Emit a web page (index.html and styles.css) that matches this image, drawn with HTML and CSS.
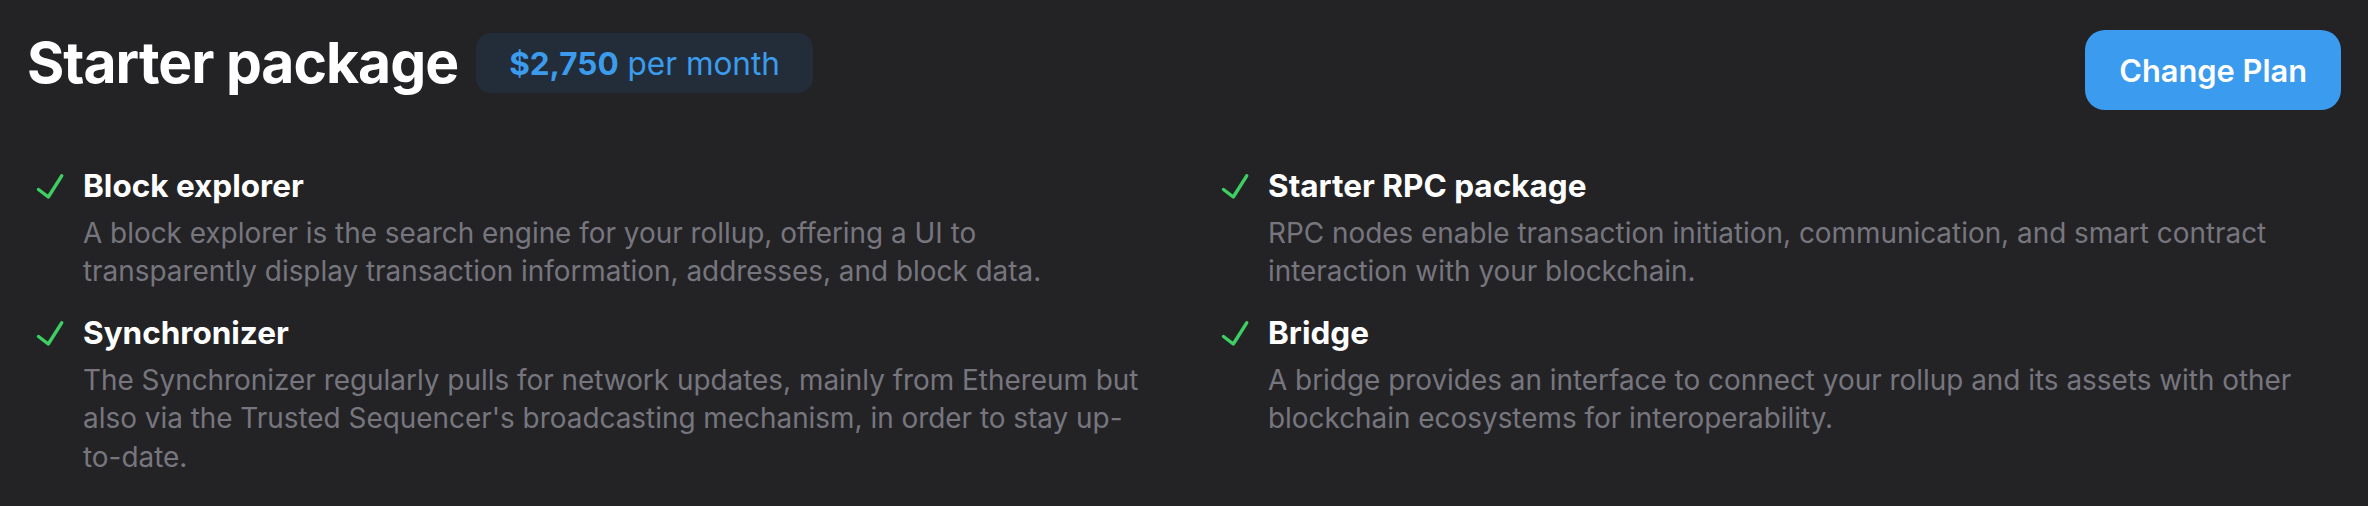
FILE: index.html
```html
<!DOCTYPE html>
<html lang="en">
<head>
<meta charset="utf-8">
<title>Starter package</title>
<link rel="stylesheet" href="styles.css">
</head>
<body>
<div class="plan">
  <header class="plan-header">
    <div class="plan-title-group">
      <h1 class="plan-title">Starter package</h1>
      <div class="price-badge"><span class="price-amount">$2,750</span> per month</div>
    </div>
    <button class="change-btn" type="button">Change Plan</button>
  </header>
  <ul class="features">
    <li class="feature">
      <svg class="check" viewBox="0 0 44 45" width="44" height="45" aria-hidden="true"><polyline points="11.5,26.5 21.3,34 34.7,12.8"/></svg>
      <div class="feature-body">
        <h3 class="feature-title">Block explorer</h3>
        <p class="feature-desc">A block explorer is the search engine for your rollup, offering a UI to transparently display transaction information, addresses, and block data.</p>
      </div>
    </li>
    <li class="feature">
      <svg class="check" viewBox="0 0 44 45" width="44" height="45" aria-hidden="true"><polyline points="11.5,26.5 21.3,34 34.7,12.8"/></svg>
      <div class="feature-body">
        <h3 class="feature-title">Starter RPC package</h3>
        <p class="feature-desc">RPC nodes enable transaction initiation, communication, and smart contract interaction with your blockchain.</p>
      </div>
    </li>
    <li class="feature">
      <svg class="check" viewBox="0 0 44 45" width="44" height="45" aria-hidden="true"><polyline points="11.5,26.5 21.3,34 34.7,12.8"/></svg>
      <div class="feature-body">
        <h3 class="feature-title">Synchronizer</h3>
        <p class="feature-desc">The Synchronizer regularly pulls for network updates, mainly from Ethereum but also via the Trusted Sequencer's broadcasting mechanism, in order to stay up-to-date.</p>
      </div>
    </li>
    <li class="feature">
      <svg class="check" viewBox="0 0 44 45" width="44" height="45" aria-hidden="true"><polyline points="11.5,26.5 21.3,34 34.7,12.8"/></svg>
      <div class="feature-body">
        <h3 class="feature-title">Bridge</h3>
        <p class="feature-desc">A bridge provides an interface to connect your rollup and its assets with other blockchain ecosystems for interoperability.</p>
      </div>
    </li>
  </ul>
</div>
</body>
</html>
```
FILE: styles.css
```css
* { box-sizing: border-box; }
html, body {
  margin: 0;
  padding: 0;
  background: #232326;
}
body {
  font-family: Inter, "Noto Sans", sans-serif;
  color: #ffffff;
}
.plan {
  padding: 30px 27px 0 27px;
}
.plan-header {
  display: flex;
  justify-content: space-between;
  align-items: flex-start;
}
.plan-title-group {
  display: flex;
  align-items: center;
  gap: 18px;
  margin-top: 3px;
}
.plan-title {
  margin: 0;
  font-size: 57px;
  line-height: 57.6px;
  font-weight: 700;
  letter-spacing: -1px;
  color: #ffffff;
}
.price-badge {
  height: 60px;
  display: flex;
  align-items: center;
  gap: 0.28em;
  padding: 0 33px;
  border-radius: 15px;
  background: #232d39;
  color: #3b9ced;
  font-size: 31.5px;
  font-weight: 400;
  white-space: nowrap;
}
.price-amount {
  font-weight: 700;
}
.change-btn {
  height: 80px;
  padding: 0 34px;
  border: 0;
  border-radius: 20px;
  background: #3a9bef;
  color: #ffffff;
  font-family: Inter, "Noto Sans", sans-serif;
  font-size: 30.8px;
  font-weight: 600;
  cursor: pointer;
}
.features {
  list-style: none;
  margin: 53px 0 0 0;
  padding: 0;
  display: grid;
  grid-template-columns: 1fr 1fr;
  column-gap: 56px;
  row-gap: 19px;
}
.feature {
  display: flex;
  align-items: flex-start;
  gap: 12px;
}
.check {
  flex: none;
  display: block;
}
.check polyline {
  fill: none;
  stroke: #3ecf63;
  stroke-width: 3.4;
  stroke-linecap: round;
  stroke-linejoin: round;
}
.feature-body {
  flex: 1;
  min-width: 0;
}
.feature-title {
  margin: 0;
  font-size: 31.5px;
  line-height: 45px;
  font-weight: 700;
  color: #ffffff;
}
.feature-desc {
  margin: 6px 0 0 0;
  font-size: 27.9px;
  line-height: 38.4px;
  font-weight: 400;
  color: #77767e;
}
```
